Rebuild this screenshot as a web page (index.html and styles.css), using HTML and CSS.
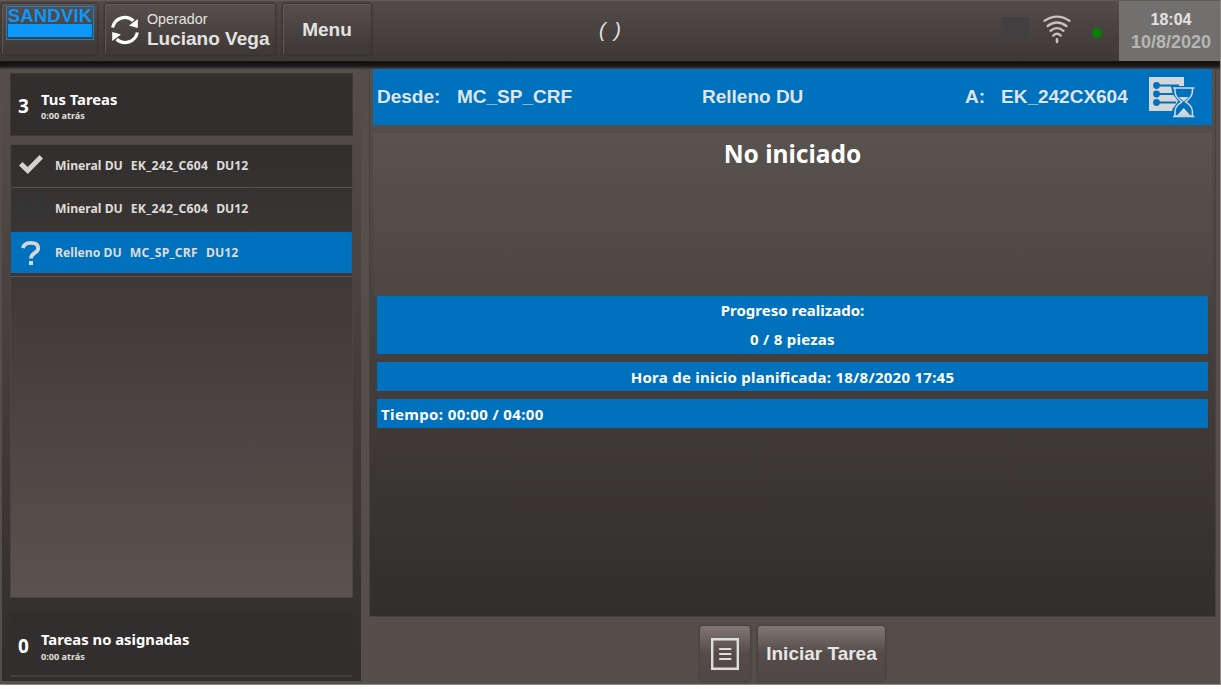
FILE: index.html
```html
<!DOCTYPE html>
<html lang="es">
<head>
<meta charset="utf-8">
<title>Tareas</title>
<link rel="stylesheet" href="styles.css">
</head>
<body>
<div class="screen">
  <header class="topbar">
    <div class="btn logo-btn"><div class="logo"><span class="logo-name">SANDVIK</span><span class="logo-bar"></span></div></div>
    <div class="btn operator">
      <svg class="sync" viewBox="0 0 28 30" width="28" height="30">
        <g fill="none" stroke="#fff" stroke-width="3.2"><path d="M1.6 12.5A12.6 12.6 0 0 1 22.4 5.8"/><path d="M26.4 17.5A12.6 12.6 0 0 1 5.6 24.2"/></g>
        <path fill="#fff" d="M26.8 4V13L18 10.4ZM1.2 26V17L10 19.6Z"/>
      </svg>
      <div class="op-text"><span class="op-label">Operador</span><span class="op-name">Luciano Vega</span></div>
    </div>
    <div class="btn menu">Menu</div>
    <div class="paren">( )</div>
    <div class="status">
      <span class="dim-box"></span>
      <svg class="wifi" viewBox="0 0 28 29" width="28" height="29">
        <g fill="none" stroke="#c6c3c2" stroke-width="2.3" stroke-linecap="round"><path d="M1.6 5.8Q14 -2.6 26.4 5.8"/><path d="M4.6 11Q14 4 23.4 11"/><path d="M7.5 15.8Q14 10.4 20.5 15.8"/><path d="M10.3 20.6Q14 17 17.7 20.6"/></g>
        <ellipse cx="14" cy="25.5" rx="1.4" ry="2.8" fill="#c6c3c2"/>
      </svg>
      <span class="dot"></span>
    </div>
    <div class="clock"><span class="time">18:04</span><span class="date">10/8/2020</span></div>
  </header>
  <div class="content">
    <aside class="side">
      <div class="card"><span class="count">3</span><div><div class="card-title">Tus Tareas</div><div class="ago">0:00 atrás</div></div></div>
      <div class="list">
        <div class="row"><svg viewBox="0 0 24 20" width="24" height="20"><path fill="#d4d3d2" d="M0 10.5L3.5 7L8.8 12L20.5 0L24 3.5L8.8 19Z"/></svg><span class="ore">Mineral DU</span><span class="spot">EK_242_C604</span><span>DU12</span></div>
        <div class="row"><svg viewBox="0 0 24 24" width="24" height="24"><path fill="#343536" d="M0 0H8V24H0ZM16 0H24V24H16Z"/></svg><span class="ore">Mineral DU</span><span class="spot">EK_242_C604</span><span>DU12</span></div>
        <div class="row active"><svg viewBox="0 0 24 24" width="24" height="24"><path fill="none" stroke="#d4d8dc" stroke-width="3.8" d="M4 7.2Q5 1.9 11.7 1.9Q19.2 1.9 19.2 7.2Q19.2 10 15.6 12Q12 14 12 17.5"/><path fill="#d4d8dc" d="M10 20H14V24H10Z"/></svg><span class="ore">Relleno DU</span><span class="spot">MC_SP_CRF</span><span>DU12</span></div>
        <div class="rest"></div>
      </div>
      <div class="card bottom"><span class="count">0</span><div><div class="card-title">Tareas no asignadas</div><div class="ago">0:00 atrás</div></div></div>
    </aside>
    <section class="main">
      <div class="detail">
        <div class="route">
          <span class="from">Desde:</span><span class="place">MC_SP_CRF</span><span class="kind">Relleno DU</span><span class="to">A:</span><span class="dest">EK_242CX604</span>
          <svg class="plan" viewBox="0 0 46 41" width="46" height="41">
            <path fill="#d3d7da" d="M0 0H35V9H24L29 24L23 34H0Z"/>
            <g stroke="#0071bc" stroke-width="2" fill="#0071bc"><path d="M8 8.5H30M8 17H25M8 25.5H27"/><circle cx="7.5" cy="8.5" r="2.4"/><circle cx="7.5" cy="17" r="2.4"/><circle cx="7.5" cy="25.5" r="2.4"/></g>
            <path fill="#0071bc" stroke="#0071bc" stroke-width="5" d="M25 11.4H44V16L36.6 24.8L43 33V39H26V33L32.8 24.8L26 16Z"/>
            <path fill="#0071bc" stroke="#d3d7da" stroke-width="1.5" d="M24 11H45.4M26 11V15Q26.3 20 32.8 24.8Q26.3 29 26 34V39H43.4V34Q43.1 29 36.6 24.8Q43.1 20 43.4 15V11M24 39.4H45.4"/>
            <path fill="#d3d7da" d="M29.5 20H40L34.7 24.4ZM34.7 31L41.5 38.4H28Z"/>
          </svg>
        </div>
        <div class="state"><span>No iniciado</span></div>
        <div class="bars">
          <div class="bar progress"><span>Progreso realizado:</span><span class="pieces">0 / 8 piezas</span></div>
          <div class="bar"><span class="planned">Hora de inicio planificada: 18/8/2020 17:45</span></div>
          <div class="bar left"><span class="elapsed">Tiempo: 00:00 / 04:00</span></div>
        </div>
      </div>
      <div class="actions">
        <div class="act note"><svg viewBox="0 0 28 32" width="28" height="32"><path fill="none" stroke="#dedddc" stroke-width="2.4" d="M1.2 1.2H26.8V30.8H1.2Z"/><path stroke="#dedddc" stroke-width="2.2" stroke-linecap="round" d="M9 11H19.5M9 16H19.5M9 21H19.5"/></svg></div>
        <div class="act start">Iniciar Tarea</div>
      </div>
    </section>
  </div>
</div>
</body>
</html>
```
FILE: styles.css
```css
* { box-sizing: border-box; }
body { margin: 0; width: 1221px; height: 689px; overflow: hidden; background: #fdfdfd; font-family: "Liberation Sans", Arial, sans-serif; }
span { white-space: nowrap; }
.screen { width: 1221px; height: 685px; display: flex; flex-direction: column; background: #554f4b; border-bottom: 1px solid #8c8886; border-right: 1px solid #8f8a88; }
.topbar { height: 62px; flex: none; display: flex; background: linear-gradient(#544a4a, #3d3935); border-top: 1px solid #625c59; border-bottom: 1px solid #181716; padding-left: 2px; color: #e4e2e1; }
.btn { height: 51px; margin-top: 3px; border-radius: 3px; background: linear-gradient(#574f4d, #3c3835); box-shadow: 0 0 2px 1px #35302e, inset 1px 1px 0 #625a58; display: flex; align-items: center; }
.logo-btn { width: 95px; align-items: flex-start; padding: 2px 0 0 4px; }
.logo { width: 88px; height: 34px; border: 1px solid #0b86da; display: flex; flex-direction: column; align-items: center; }
.logo-name { height: 17px; line-height: 18px; font-size: 18.5px; font-weight: bold; letter-spacing: .2px; color: #0a98fa; }
.logo-bar { width: 84px; height: 13px; background: #0a98fb; }
.operator { width: 170px; margin-left: 8px; padding-left: 6px; }
.sync { margin-right: 8px; }
.op-text { display: flex; flex-direction: column; }
.op-label { font-size: 14.3px; line-height: 17px; }
.op-name { font-size: 19px; line-height: 21px; font-weight: bold; }
.menu { width: 88px; margin-left: 8px; justify-content: center; font-size: 19px; font-weight: bold; }
.paren { width: 24px; margin-left: 227px; line-height: 58px; font-size: 20px; font-style: italic; text-align: center; white-space: nowrap; word-spacing: 3px; }
.status { display: flex; margin-left: 379px; width: 118px; }
.dim-box { width: 28px; height: 21px; margin-top: 16px; background: #413f3f; }
.wifi { margin: 14px 0 0 14px; }
.dot { width: 10px; height: 10px; border-radius: 5px; background: #058205; margin: 27px 0 0 21px; }
.clock { width: 101px; display: flex; flex-direction: column; align-items: center; background: #71706e; padding: 9px 0 0 3px; }
.time { font-size: 16px; font-weight: bold; line-height: 20px; }
.date { font-size: 18px; font-weight: bold; line-height: 24px; color: #b7b6b5; }
.content { flex: 1; display: flex; background: linear-gradient(#11100f 0, #1a1918 4px, #554f4b 8px); }
.side { width: 359px; height: 619px; margin-left: 2px; padding: 11px 8px 0; background: linear-gradient(transparent 7px, #554f4b 8px, #322e2d 600px); font-family: "Noto Sans", "Open Sans", sans-serif; font-weight: bold; color: #fff; }
.card { height: 63px; display: flex; padding: 15px 0 0 7px; background: #322e2d; border: 1px solid #3e3937; }
.card.bottom { height: 64px; margin-top: 15px; border-color: #322e2d; border-bottom: 2px solid #413e3b; padding-top: 15px; }
.count { width: 23px; font-size: 19px; line-height: 35px; }
.card-title { font-size: 14.8px; line-height: 21px; white-space: nowrap; }
.ago { font-size: 9.1px; line-height: 11px; color: #e2e0df; }
.bottom .ago { padding-top: 1px; }
.list { height: 454px; margin-top: 8px; display: flex; flex-direction: column; background: linear-gradient(#322e2d, #59534f 445px); border: 1px solid #4a4543; }
.row { height: 43px; flex: none; display: flex; align-items: center; padding: 0 0 2px 8px; border-bottom: 1px solid #55504e; font-size: 12.2px; color: #dedcdb; }
.row svg { margin-right: 12px; }
.ore { margin-right: 8px; }
.spot { margin-right: 8px; letter-spacing: .25px; }
.row:nth-child(2) { height: 44px; border-bottom: 1px solid #3e3937; }
.row.active { height: 41px; background: #0071bc; border: 0; padding-bottom: 0; }
.rest { height: 4px; border-bottom: 1px solid #5a5552; background: #3b3635; }
.main { width: 847px; margin-left: 8px; padding-top: 7px; }
.detail { height: 548px; background: linear-gradient(#57514d, #322e2d); border: 1px solid #46413f; border-top: 0; }
.route { height: 56px; width: 839px; margin-left: 3px; padding-left: 4px; display: flex; align-items: center; background: #0071bc; color: #dfe5ea; font-size: 19px; font-weight: bold; }
.from { width: 80px; }
.place { width: 245px; }
.kind { width: 263px; }
.to { width: 36px; }
.dest { width: 148px; }
.state { height: 163px; margin: 8px 3px 0; padding: 1px 0 0 0; text-align: center; background: linear-gradient(#59534f, #4c4743); font: bold 24.5px/40px "Noto Sans", sans-serif; color: #fff; }
.bars { padding: 0 7px; display: flex; flex-direction: column; gap: 8px; font-family: "Noto Sans", sans-serif; font-weight: bold; color: #fff; }
.bar { height: 29px; background: #0071bc; border-radius: 1px; display: flex; align-items: center; justify-content: center; font-size: 15px; }
.bar.progress { height: 58px; flex-direction: column; }
.bar.progress span { line-height: 29px; }
.bar.left { justify-content: flex-start; padding-left: 4px; }
.pieces { letter-spacing: .25px; }
.planned { letter-spacing: .26px; }
.elapsed { letter-spacing: .38px; }
.actions { display: flex; gap: 8px; padding: 9px 0 0 331px; }
.act { height: 55px; border-radius: 3px; display: flex; align-items: center; justify-content: center; background: linear-gradient(#807775, #554c4a 50%, #504846); box-shadow: 0 0 2px 1px #443f3c; color: #e8e6e5; font-size: 19px; font-weight: bold; }
.note { width: 50px; }
.start { width: 127px; }
```
